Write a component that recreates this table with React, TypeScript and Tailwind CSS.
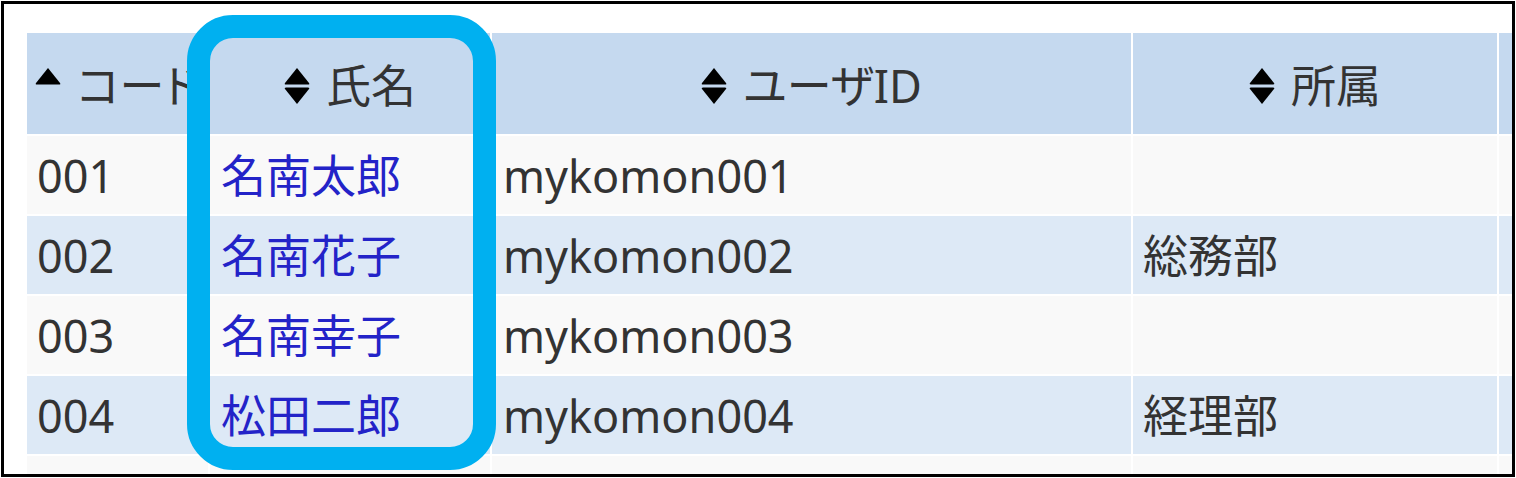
import React from "react";

type Member = {
  code: string;
  name: string;
  userId: string;
  dept: string;
};

const members: Member[] = [
  { code: "001", name: "名南太郎", userId: "mykomon001", dept: "" },
  { code: "002", name: "名南花子", userId: "mykomon002", dept: "総務部" },
  { code: "003", name: "名南幸子", userId: "mykomon003", dept: "" },
  { code: "004", name: "松田二郎", userId: "mykomon004", dept: "経理部" },
];

function SortIcon({ upOnly = false }: { upOnly?: boolean }) {
  return (
    <svg width="26" height="40" viewBox="0 0 26 40" className="shrink-0">
      <path d="M13 2 L25 17 Q26 18.5 24 18.5 L2 18.5 Q0 18.5 1 17 Z" fill="#000" />
      {!upOnly && (
        <path d="M2 21.5 L24 21.5 Q26 21.5 25 23 L13 38 L1 23 Q0 21.5 2 21.5 Z" fill="#000" />
      )}
    </svg>
  );
}

function HeaderCell({ label, upOnly }: { label: string; upOnly?: boolean }) {
  return (
    <th className="bg-[#c5d9ef] h-[101px] p-0 font-normal align-middle overflow-hidden whitespace-nowrap">
      <div className="flex items-center justify-center gap-[16px] pt-[4px]">
        <SortIcon upOnly={upOnly} />
        <span>{label}</span>
      </div>
    </th>
  );
}

export default function App() {
  return (
    <div className="relative w-[1516px] h-[478px] bg-white p-px">
      <div
        className="h-full border-[3px] border-black overflow-hidden pl-[21px] pt-[27px] text-[45px] leading-none text-[#333] [font-feature-settings:'palt']"
        style={{ fontFamily: '"Noto Sans", "Noto Sans CJK JP", sans-serif' }}
      >
        <table className="table-fixed w-[1678px] border-separate border-spacing-[2px]">
          <colgroup>
            <col className="w-[181px]" />
            <col className="w-[280px]" />
            <col className="w-[639px]" />
            <col className="w-[364px]" />
            <col className="w-[202px]" />
          </colgroup>
          <thead>
            <tr>
              <HeaderCell label="コード" upOnly />
              <HeaderCell label="氏名" />
              <HeaderCell label="ユーザID" />
              <HeaderCell label="所属" />
              <th className="bg-[#c5d9ef] p-0" />
            </tr>
          </thead>
          <tbody>
            {members.map((m, i) => (
              <tr key={m.code} className={i % 2 === 0 ? "bg-[#f9f9f9]" : "bg-[#dde9f6]"}>
                <td className="h-[78px] pl-[10px] align-middle">{m.code}</td>
                <td className="h-[78px] pl-[11px] align-middle text-[#2323c8] whitespace-nowrap">
                  {m.name}
                </td>
                <td className="h-[78px] pl-[11px] align-middle">{m.userId}</td>
                <td className="h-[78px] pl-[10px] align-middle">{m.dept}</td>
                <td className="h-[78px]" />
              </tr>
            ))}
            <tr className="bg-[#f9f9f9]">
              <td className="h-[78px]" />
              <td className="h-[78px]" />
              <td className="h-[78px]" />
              <td className="h-[78px]" />
              <td className="h-[78px]" />
            </tr>
          </tbody>
        </table>
      </div>
      {/* highlight around the name column */}
      <div className="absolute left-[187px] top-[15px] w-[309px] h-[455px] border-[23px] border-[#00b0f0] rounded-[46px] pointer-events-none" />
    </div>
  );
}
